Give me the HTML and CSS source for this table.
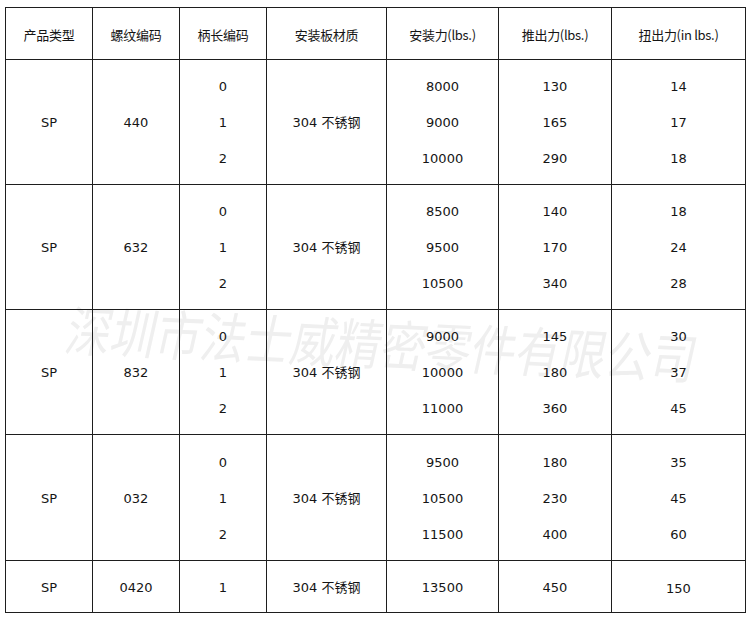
FILE: index.html
```html
<!DOCTYPE html>
<html lang="zh-CN">
<head>
<meta charset="utf-8">
<title>产品参数</title>
<link rel="stylesheet" href="styles.css">
</head>
<body>
<div class="page">
  <div class="sheet">
    <div class="cell head">产品类型</div>
    <div class="cell head">螺纹编码</div>
    <div class="cell head">柄长编码</div>
    <div class="cell head">安装板材质</div>
    <div class="cell head">安装力(lbs.)</div>
    <div class="cell head">推出力(lbs.)</div>
    <div class="cell head">扭出力(in lbs.)</div>

    <div class="cell">SP</div>
    <div class="cell">440</div>
    <div class="cell multi"><span>0</span><span>1</span><span>2</span></div>
    <div class="cell">304 不锈钢</div>
    <div class="cell multi"><span>8000</span><span>9000</span><span>10000</span></div>
    <div class="cell multi"><span>130</span><span>165</span><span>290</span></div>
    <div class="cell multi"><span>14</span><span>17</span><span>18</span></div>

    <div class="cell">SP</div>
    <div class="cell">632</div>
    <div class="cell multi"><span>0</span><span>1</span><span>2</span></div>
    <div class="cell">304 不锈钢</div>
    <div class="cell multi"><span>8500</span><span>9500</span><span>10500</span></div>
    <div class="cell multi"><span>140</span><span>170</span><span>340</span></div>
    <div class="cell multi"><span>18</span><span>24</span><span>28</span></div>

    <div class="cell">SP</div>
    <div class="cell">832</div>
    <div class="cell multi"><span>0</span><span>1</span><span>2</span></div>
    <div class="cell">304 不锈钢</div>
    <div class="cell multi"><span>9000</span><span>10000</span><span>11000</span></div>
    <div class="cell multi"><span>145</span><span>180</span><span>360</span></div>
    <div class="cell multi"><span>30</span><span>37</span><span>45</span></div>

    <div class="cell">SP</div>
    <div class="cell">032</div>
    <div class="cell multi"><span>0</span><span>1</span><span>2</span></div>
    <div class="cell">304 不锈钢</div>
    <div class="cell multi"><span>9500</span><span>10500</span><span>11500</span></div>
    <div class="cell multi"><span>180</span><span>230</span><span>400</span></div>
    <div class="cell multi"><span>35</span><span>45</span><span>60</span></div>

    <div class="cell">SP</div>
    <div class="cell">0420</div>
    <div class="cell">1</div>
    <div class="cell">304 不锈钢</div>
    <div class="cell">13500</div>
    <div class="cell">450</div>
    <div class="cell low">150</div>
  </div>
  <div class="watermark">深圳市法士威精密零件有限公司</div>
</div>
</body>
</html>
```

FILE: styles.css
```css
html, body {
  margin: 0;
  padding: 0;
  background: #ffffff;
}

.page {
  position: relative;
  width: 750px;
  height: 617px;
  padding: 7px 0 0 5px;
  box-sizing: border-box;
  font-family: "DejaVu Sans", "Noto Sans CJK SC", sans-serif;
  font-size: 13px;
  color: #151515;
}

.sheet {
  position: relative;
  z-index: 1;
  display: grid;
  grid-template-columns: 87px 87px 87px 120px 112px 113px 134px;
  grid-template-rows: 52px 125px 125px 125px 126px 52px;
  width: max-content;
  border-left: 1px solid #1e1e1e;
  border-top: 1px solid #1e1e1e;
}

.cell {
  box-sizing: border-box;
  border-right: 1px solid #1e1e1e;
  border-bottom: 1px solid #1e1e1e;
  display: flex;
  align-items: center;
  justify-content: center;
  text-align: center;
  line-height: 16px;
  padding-top: 2px;
}

.head {
  font-family: "Noto Sans CJK SC", "DejaVu Sans", sans-serif;
  font-size: 13px;
  letter-spacing: -0.3px;
}

.multi {
  flex-direction: column;
}

.multi span {
  display: block;
  height: 36px;
  line-height: 36px;
}

.low {
  padding-top: 4px;
}

.watermark {
  position: absolute;
  z-index: 0;
  left: 68px;
  top: 303px;
  font-family: "Noto Sans CJK SC", sans-serif;
  font-weight: 400;
  font-size: 45px;
  letter-spacing: 0;
  line-height: 50px;
  color: #efefef;
  white-space: nowrap;
  transform: rotate(2.6deg) skewX(-10deg) scaleY(1.2);
  transform-origin: left center;
  pointer-events: none;
}
```
